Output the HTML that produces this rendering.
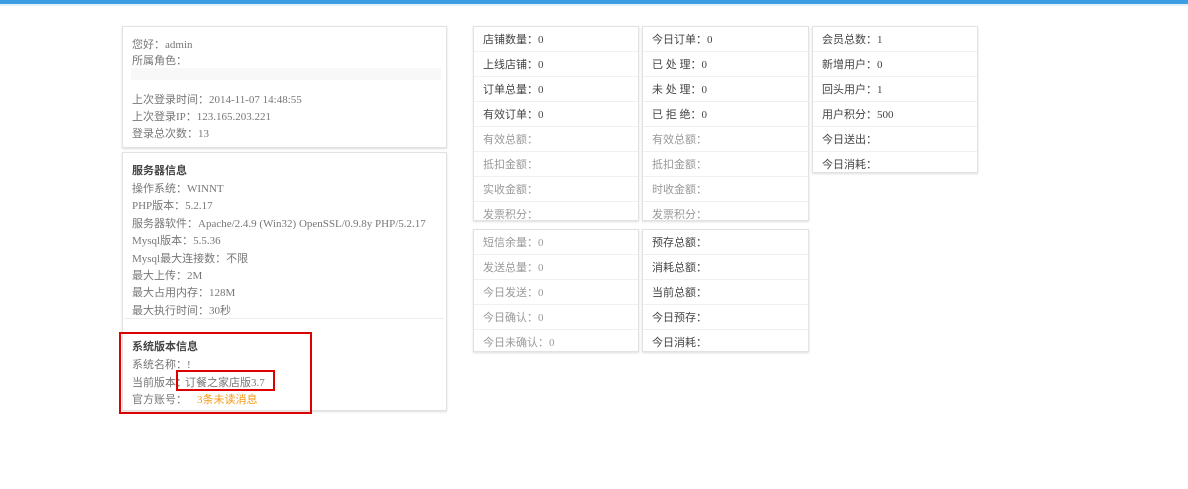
<!DOCTYPE html><html><head><meta charset="utf-8"><style>
body{margin:0;width:1188px;height:489px;background:#fff;font-family:"Liberation Serif","Noto Sans CJK SC",serif;font-size:11px;color:#777;position:relative;overflow:hidden}
.top{position:absolute;left:0;top:0;width:1188px;height:4px;background:#3d9de2}
.top2{position:absolute;left:0;top:4px;width:1188px;height:2px;background:#e3f1fb}
.box{position:absolute;border:1px solid #e2e2e2;box-shadow:0 1px 2px #ddd;background:#fff}
.t{position:absolute;white-space:nowrap;font-family:"Liberation Serif","Noto Sans CJK SC",serif}
.row{height:24px;line-height:26px;border-bottom:1px solid #f0f0f0;padding-left:9px;font-family:"Liberation Serif","Noto Sans CJK SC",serif;color:#444;white-space:nowrap}
.row.l{color:#999}
.b{color:#444;font-weight:bold}
</style></head><body>
<div class="top"></div><div class="top2"></div>
<div class="box" style="left:122px;top:26px;width:323px;height:120px"></div>
<div style="position:absolute;left:131px;top:68px;width:310px;height:12px;background:#f8f8f8"></div>
<div class="t" style="left:132px;top:36px">您好：admin</div>
<div class="t" style="left:132px;top:52px">所属角色：</div>
<div class="t" style="left:132px;top:91px">上次登录时间：2014-11-07 14:48:55</div>
<div class="t" style="left:132px;top:108px">上次登录IP：123.165.203.221</div>
<div class="t" style="left:132px;top:125px">登录总次数：13</div>
<div class="box" style="left:122px;top:152px;width:323px;height:257px"></div>
<div style="position:absolute;left:124px;top:318px;width:320px;height:1px;background:#eee"></div>
<div class="t b" style="left:132px;top:162px">服务器信息</div>
<div class="t" style="left:132px;top:180px">操作系统：WINNT</div>
<div class="t" style="left:132px;top:197px">PHP版本：5.2.17</div>
<div class="t" style="left:132px;top:215px">服务器软件：Apache/2.4.9 (Win32) OpenSSL/0.9.8y PHP/5.2.17</div>
<div class="t" style="left:132px;top:232px">Mysql版本：5.5.36</div>
<div class="t" style="left:132px;top:250px">Mysql最大连接数：不限</div>
<div class="t" style="left:132px;top:267px">最大上传：2M</div>
<div class="t" style="left:132px;top:284px">最大占用内存：128M</div>
<div class="t" style="left:132px;top:302px">最大执行时间：30秒</div>
<div style="position:absolute;left:119px;top:332px;width:189px;height:78px;border:2px solid #d00"></div>
<div class="t b" style="left:132px;top:338px">系统版本信息</div>
<div class="t" style="left:132px;top:356px">系统名称：!</div>
<div class="t" style="left:132px;top:374px">当前版本：</div>
<div style="position:absolute;left:176px;top:370px;width:95px;height:17px;border:2px solid #d00"></div>
<div class="t" style="left:185px;top:374px">订餐之家店版3.7</div>
<div class="t" style="left:132px;top:391px">官方账号：<span style="margin-left:10px;color:#f39a1b">3条未读消息</span></div>

<div class="box" style="left:473px;top:26px;width:164px;height:193px">
<div class="row">店铺数量：0</div><div class="row">上线店铺：0</div><div class="row">订单总量：0</div><div class="row">有效订单：0</div><div class="row l">有效总额：</div><div class="row l">抵扣金额：</div><div class="row l">实收金额：</div><div class="row l" style="border:0">发票积分：</div></div>
<div class="box" style="left:642px;top:26px;width:165px;height:193px">
<div class="row">今日订单：0</div><div class="row">已 处 理：0</div><div class="row">未 处 理：0</div><div class="row">已 拒 绝：0</div><div class="row l">有效总额：</div><div class="row l">抵扣金额：</div><div class="row l">时收金额：</div><div class="row l" style="border:0">发票积分：</div></div>
<div class="box" style="left:812px;top:26px;width:164px;height:145px">
<div class="row">会员总数：1</div><div class="row">新增用户：0</div><div class="row">回头用户：1</div><div class="row">用户积分：500</div><div class="row">今日送出：</div><div class="row" style="border:0">今日消耗：</div></div>
<div class="box" style="left:473px;top:229px;width:164px;height:121px">
<div class="row l">短信余量：0</div><div class="row l">发送总量：0</div><div class="row l">今日发送：0</div><div class="row l">今日确认：0</div><div class="row l" style="border:0">今日未确认：0</div></div>
<div class="box" style="left:642px;top:229px;width:165px;height:121px">
<div class="row">预存总额：</div><div class="row">消耗总额：</div><div class="row">当前总额：</div><div class="row">今日预存：</div><div class="row" style="border:0">今日消耗：</div></div>
</body></html>
